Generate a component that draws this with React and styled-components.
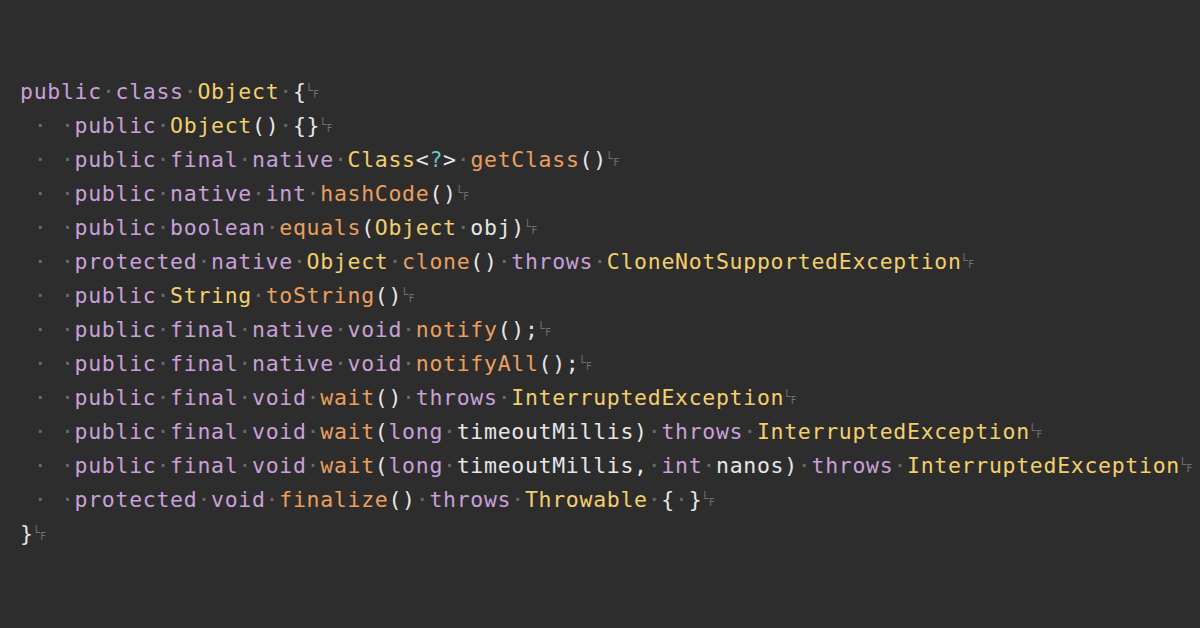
import React from "react";
import styled, { createGlobalStyle } from "styled-components";

const GlobalStyle = createGlobalStyle`
  html, body {
    margin: 0;
    padding: 0;
    background: #2d2d2d;
  }
`;

// k = keyword, t = type, m = method, p = punctuation, q = wildcard, s = space
const lines = [
  { indent: false, tokens: [["k", "public"], ["s"], ["k", "class"], ["s"], ["t", "Object"], ["s"], ["p", "{"]] },
  { indent: true, tokens: [["k", "public"], ["s"], ["t", "Object"], ["p", "()"], ["s"], ["p", "{}"]] },
  { indent: true, tokens: [["k", "public"], ["s"], ["k", "final"], ["s"], ["k", "native"], ["s"], ["t", "Class"], ["p", "<"], ["q", "?"], ["p", ">"], ["s"], ["m", "getClass"], ["p", "()"]] },
  { indent: true, tokens: [["k", "public"], ["s"], ["k", "native"], ["s"], ["k", "int"], ["s"], ["m", "hashCode"], ["p", "()"]] },
  { indent: true, tokens: [["k", "public"], ["s"], ["k", "boolean"], ["s"], ["m", "equals"], ["p", "("], ["t", "Object"], ["s"], ["p", "obj)"]] },
  { indent: true, tokens: [["k", "protected"], ["s"], ["k", "native"], ["s"], ["t", "Object"], ["s"], ["m", "clone"], ["p", "()"], ["s"], ["k", "throws"], ["s"], ["t", "CloneNotSupportedException"]] },
  { indent: true, tokens: [["k", "public"], ["s"], ["t", "String"], ["s"], ["m", "toString"], ["p", "()"]] },
  { indent: true, tokens: [["k", "public"], ["s"], ["k", "final"], ["s"], ["k", "native"], ["s"], ["k", "void"], ["s"], ["m", "notify"], ["p", "();"]] },
  { indent: true, tokens: [["k", "public"], ["s"], ["k", "final"], ["s"], ["k", "native"], ["s"], ["k", "void"], ["s"], ["m", "notifyAll"], ["p", "();"]] },
  { indent: true, tokens: [["k", "public"], ["s"], ["k", "final"], ["s"], ["k", "void"], ["s"], ["m", "wait"], ["p", "()"], ["s"], ["k", "throws"], ["s"], ["t", "InterruptedException"]] },
  { indent: true, tokens: [["k", "public"], ["s"], ["k", "final"], ["s"], ["k", "void"], ["s"], ["m", "wait"], ["p", "("], ["k", "long"], ["s"], ["p", "timeoutMillis)"], ["s"], ["k", "throws"], ["s"], ["t", "InterruptedException"]] },
  { indent: true, tokens: [["k", "public"], ["s"], ["k", "final"], ["s"], ["k", "void"], ["s"], ["m", "wait"], ["p", "("], ["k", "long"], ["s"], ["p", "timeoutMillis,"], ["s"], ["k", "int"], ["s"], ["p", "nanos)"], ["s"], ["k", "throws"], ["s"], ["t", "InterruptedException"]] },
  { indent: true, tokens: [["k", "protected"], ["s"], ["k", "void"], ["s"], ["m", "finalize"], ["p", "()"], ["s"], ["k", "throws"], ["s"], ["t", "Throwable"], ["s"], ["p", "{"], ["s"], ["p", "}"]] },
  { indent: false, tokens: [["p", "}"]] },
];

const colors = {
  k: "#c9a0d8",
  t: "#f3cf6c",
  m: "#eb9f5f",
  p: "#e6e6e6",
  q: "#66c6c6",
};

const Editor = styled.div`
  padding: 74px 0 0 20px;
  font-family: "DejaVu Sans Mono", "Liberation Mono", monospace;
  font-size: 21.5px;
  letter-spacing: 0.7px;
  height: 628px;
  box-sizing: border-box;
  overflow: hidden;
`;

const Line = styled.div`
  display: flex;
  align-items: center;
  height: 34px;
  white-space: pre;
`;

const Token = styled.span`
  color: ${(p) => colors[p.$kind]};
`;

const Space = styled.span`
  color: #6b6b6b;
`;

const Eol = styled.span`
  display: inline-flex;
  width: 13px;
  height: 17px;
  margin-left: 1px;
  font-family: "DejaVu Sans", sans-serif;
  font-size: 10px;
  letter-spacing: 0;
  color: #707070;
  line-height: 1;
`;

const EolL = styled.span`
  align-self: flex-start;
`;

const EolF = styled.span`
  align-self: flex-end;
`;

const LineEnd = () => (
  <Eol>
    <EolL>L</EolL>
    <EolF>F</EolF>
  </Eol>
);

const App = () => (
  <>
    <GlobalStyle />
    <Editor>
      {lines.map((line, i) => (
        <Line key={i}>
          {line.indent && <Space> · ·</Space>}
          {line.tokens.map(([kind, text], j) =>
            kind === "s" ? (
              <Space key={j}>·</Space>
            ) : (
              <Token key={j} $kind={kind}>
                {text}
              </Token>
            )
          )}
          <LineEnd />
        </Line>
      ))}
    </Editor>
  </>
);

export default App;
